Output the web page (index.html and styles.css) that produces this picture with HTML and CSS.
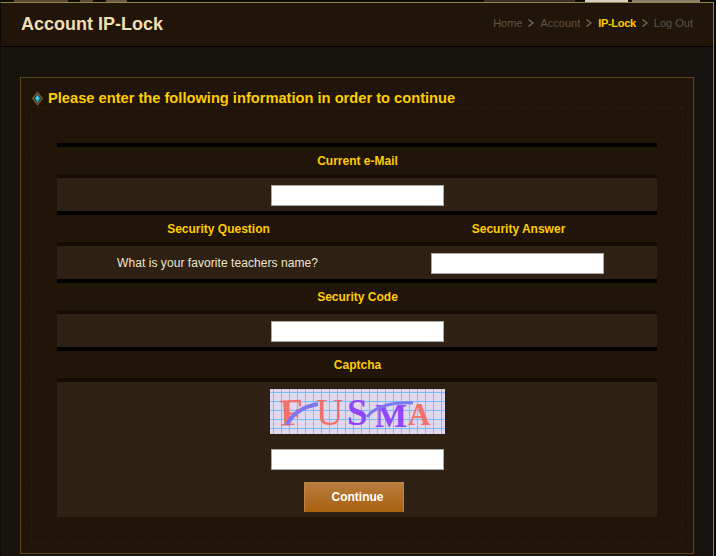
FILE: index.html
```html
<!DOCTYPE html>
<html lang="en">
<head>
    <meta charset="UTF-8" />
    <meta name="viewport" content="width=device-width, initial-scale=1.0" />
    <title>Account IP-Lock</title>
    <link rel="stylesheet" href="styles.css">
</head>
<body>
    <div class="top-strip"></div>

    <div class="frame">
        <!-- Page header -->
        <div class="header">
            <h1>Account IP-Lock</h1>
            <div class="crumbs">
                <a href="#">Home</a>
                <svg class="sep" viewBox="0 0 6 8"><path d="M.5 .5 5 4 .5 7.5" /></svg>
                <a href="#">Account</a>
                <svg class="sep" viewBox="0 0 6 8"><path d="M.5 .5 5 4 .5 7.5" /></svg>
                <a href="#" class="current">IP-Lock</a>
                <svg class="sep" viewBox="0 0 6 8"><path d="M.5 .5 5 4 .5 7.5" /></svg>
                <a href="#">Log Out</a>
            </div>
        </div>

        <div class="panel">
            <h2 class="panel-title">
                <svg class="gem" viewBox="0 0 12 16">
                    <path d="M6 0 12 8 6 16 0 8Z" fill="#80602f" />
                    <path d="M6 2 10.2 8 6 14 1.8 8Z" fill="#2f200e" />
                    <path d="M6 3 9.2 8 6 13 2.8 8Z" fill="#129ab8" />
                    <path d="M6 5 7.6 8 6 10 4.4 8Z" fill="#62dcec" />
                </svg>
                Please enter the following information in order to continue
            </h2>

            <div class="panel-inner">
                <form class="lock-form">
                    <div class="row-head">Current e-Mail</div>
                    <div class="row-body">
                        <input type="text" />
                    </div>

                    <div class="row-head two-col">
                        <span>Security Question</span>
                        <span>Security Answer</span>
                    </div>
                    <div class="row-body two-col">
                        <span class="question">What is your favorite teachers name?</span>
                        <span class="answer"><input type="text" /></span>
                    </div>

                    <div class="row-head">Security Code</div>
                    <div class="row-body">
                        <input type="text" />
                    </div>

                    <div class="row-head">Captcha</div>
                    <div class="row-body captcha-body">
                        <svg class="captcha" viewBox="0 0 175 45">
                            <defs>
                                <pattern id="mesh" width="8" height="9" patternUnits="userSpaceOnUse" x="3" y="3">
                                    <path d="M.5 0V9M0 .5H8" stroke="#74bcff" stroke-width="1" fill="none" shape-rendering="crispEdges" />
                                </pattern>
                            </defs>
                            <rect width="175" height="45" fill="#e0d8ec" />
                            <rect width="175" height="45" fill="url(#mesh)" />
                            <text class="cap" x="10" y="36" font-size="38" font-weight="bold" fill="#f4706a" transform="rotate(-3 24 24)">F</text>
                            <text class="cap" x="46" y="36" font-size="38" fill="#f4706a">U</text>
                            <text class="cap" x="77" y="36" font-size="37" font-weight="bold" fill="#9048f8">S</text>
                            <text class="cap" x="105" y="38" font-size="34" font-weight="bold" fill="#9048f8">M</text>
                            <text class="cap" x="138" y="36" font-size="31" font-weight="bold" fill="#f4706a">A</text>
                            <path d="M17 36C22 25 32 18 48 15" stroke="#7c78f4" stroke-width="4" fill="none" />
                            <path d="M97 28C105 18 120 13 143 14" stroke="#7c78f4" stroke-width="3" fill="none" />
                        </svg>
                        <input type="text" />
                        <button type="button" class="btn">Continue</button>
                    </div>
                </form>
            </div>
        </div>
    </div>
</body>
</html>
```

FILE: styles.css
```css
html, body {
    margin: 0;
    height: 556px;
    overflow: hidden;
}

body {
    font-family: "Liberation Sans", Arial, sans-serif;
    background: #0d0b07;
    color: #f0e8d0;
    font-size: 12px;
}

.top-strip {
    height: 2px;
    background: linear-gradient(to right,
        #0d0b07 14px, #5e4a34 14px, #5e4a34 68px, #0d0b07 68px,
        #0d0b07 80px, #5e4a34 80px, #5e4a34 93px, #0d0b07 93px,
        #0d0b07 106px, #6a5a44 106px, #6a5a44 127px, #0d0b07 127px,
        #0d0b07 484px, #3c3024 484px, #3c3024 575px, #0d0b07 575px,
        #0d0b07 585px, #d8d0c0 585px, #d8d0c0 628px, #0d0b07 628px,
        #0d0b07 632px, #8c8068 632px, #8c8068 700px, #0d0b07 700px);
}

.frame {
    box-sizing: border-box;
    width: 714px;
    height: 554px;
    border-top: 1px solid #8f8848;
    border-right: 1px solid #8f8848;
    border-left: 1px solid #0d0b07;
    background: #17130e;
}

/* header */
.header {
    display: flex;
    align-items: center;
    justify-content: space-between;
    height: 43px;
    padding: 0 20px;
    background: #211408;
    border-bottom: 1px solid #000;
}

h1 {
    margin: 0;
    font-size: 18px;
    font-weight: bold;
    color: #efdfb2;
}

.crumbs {
    display: flex;
    align-items: center;
    gap: 6px;
    font-size: 11px;
    margin-top: -3px;
}

.crumbs a {
    color: #5e5644;
    text-decoration: none;
}

.crumbs a.current {
    color: #ffcc00;
    font-weight: bold;
    letter-spacing: -0.3px;
}

.sep {
    width: 6px;
    height: 8px;
    fill: none;
    stroke: #7c7566;
    stroke-width: 1.1;
}

/* panel */
.panel {
    box-sizing: border-box;
    width: 674px;
    height: 477px;
    margin: 30px 0 0 19px;
    padding: 0 10px 10px;
    background: #211408;
    border: 1px solid #5c4318;
}

.panel-title {
    display: flex;
    align-items: center;
    gap: 5px;
    height: 18px;
    margin: 0;
    padding: 11px 0 0 1px;
    font-size: 14.67px;
    font-weight: bold;
    color: #ffcc00;
}

.gem {
    width: 11px;
    height: 15px;
    flex: none;
}

.panel-inner {
    padding: 35px 25px 25px;
    border: 1px dashed #2c1d0d;
}

/* form rows */
.lock-form {
    width: 600px;
}

.row-head {
    height: 27px;
    line-height: 29px;
    padding-left: 1px;
    text-align: center;
    font-weight: bold;
    color: #ffcc00;
    border-top: 4px solid #000;
    border-bottom: 4px solid #150d05;
}

.row-body {
    display: flex;
    align-items: center;
    justify-content: center;
    height: 33px;
    background: #2e2113;
}

.row-body input {
    margin-top: 2px;
}

.two-col {
    display: grid;
    grid-template-columns: 321px 279px;
    justify-items: center;
    align-items: center;
}

.row-head.two-col {
    grid-template-columns: 323px 277px;
    padding-left: 0;
}

.question {
    color: #efe6cc;
    letter-spacing: 0.06px;
}

.answer {
    display: flex;
}

input {
    box-sizing: border-box;
    width: 173px;
    height: 21px;
    padding: 0 3px;
    background: #fff;
    border: 1px solid #a8a8a8;
    border-radius: 0;
}

.captcha-body {
    flex-direction: column;
    justify-content: flex-start;
    height: 135px;
    padding-top: 7px;
    box-sizing: border-box;
}

.captcha-body input {
    margin-top: 0;
}

.captcha {
    display: block;
    width: 175px;
    height: 45px;
    margin-bottom: 15px;
}

.cap {
    font-family: "Liberation Serif", "Times New Roman", serif;
}

.btn {
    box-sizing: border-box;
    width: 100px;
    height: 30px;
    margin: 12px 6px 0 0;
    padding: 0 0 0 7px;
    font-family: inherit;
    font-size: 12px;
    font-weight: bold;
    color: #fff;
    background: linear-gradient(#b97e3f, #a9600f);
    border: 1px solid #c08446;
    border-bottom-color: #a9600f;
}
```
